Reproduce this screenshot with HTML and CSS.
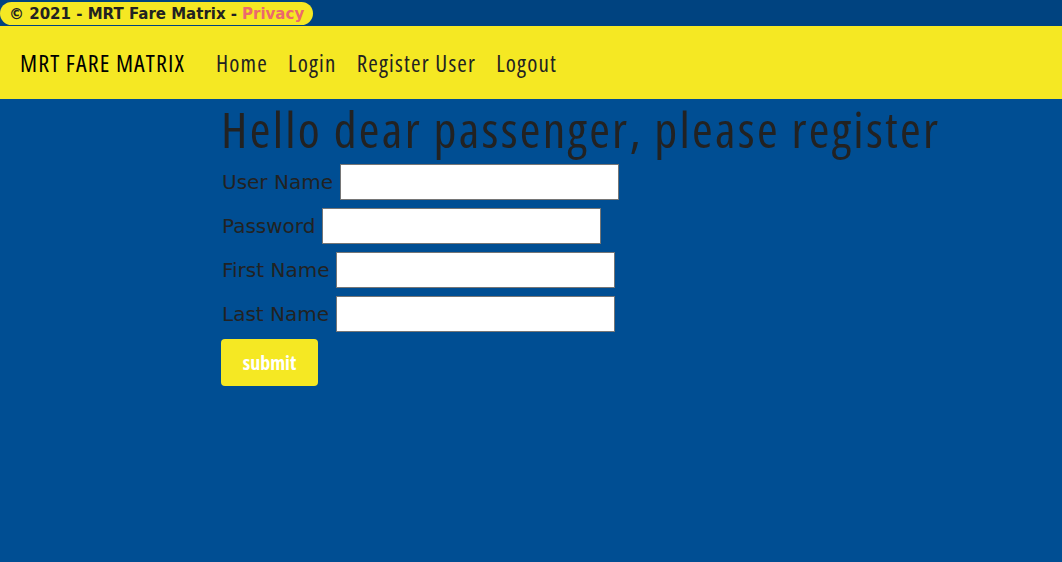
FILE: index.html
```html
<!DOCTYPE html>
<html>
<head>
<meta charset="utf-8">
<title>MRT Fare Matrix</title>
<link rel="stylesheet" href="styles.css">
</head>
<body>
<footer class="topbar">
  <div class="pill">© 2021 - MRT Fare Matrix - <a class="privacy" href="#">Privacy</a></div>
</footer>
<nav class="navbar">
  <a class="brand" href="#">MRT FARE MATRIX</a>
  <ul class="nav">
    <li><a href="#">Home</a></li>
    <li><a href="#">Login</a></li>
    <li><a href="#">Register User</a></li>
    <li><a href="#">Logout</a></li>
  </ul>
</nav>
<main class="main">
  <h1 class="title">Hello dear passenger, please register</h1>
  <form class="form">
    <div class="row"><label>User Name</label><input type="text"></div>
    <div class="row"><label>Password</label><input type="password"></div>
    <div class="row"><label>First Name</label><input type="text"></div>
    <div class="row"><label>Last Name</label><input type="text"></div>
    <button type="button" class="submit">submit</button>
  </form>
</main>
</body>
</html>
```
FILE: styles.css
```css
html, body {
  margin: 0;
  padding: 0;
}
body {
  background: #004e93;
  height: 562px;
  font-family: "DejaVu Sans", sans-serif;
  color: #222;
}
.topbar {
  background: #004380;
  height: 26px;
  display: flex;
  align-items: center;
}
.pill {
  background: #f5e823;
  border-radius: 12px;
  height: 23px;
  margin-top: 1px;
  padding: 0 9px;
  display: flex;
  align-items: center;
  font-weight: bold;
  font-size: 15px;
  color: #222;
}
.privacy {
  color: #ec696d;
  text-decoration: none;
  margin-left: 5px;
}
.navbar {
  background: #f5e823;
  height: 73px;
  display: flex;
  align-items: center;
  padding-left: 20px;
  font-family: "Open Sans", sans-serif;
  font-stretch: 75%;
}
.brand {
  color: #000;
  text-decoration: none;
  font-size: 24px;
  letter-spacing: 1.1px;
  margin-right: 31px;
}
.nav {
  list-style: none;
  display: flex;
  gap: 20px;
  margin: 0;
  padding: 0;
}
.nav a {
  color: #222;
  text-decoration: none;
  font-size: 23px;
  letter-spacing: 1.2px;
}
.main {
  padding-left: 222px;
}
.title {
  font-family: "Open Sans", sans-serif;
  font-stretch: 75%;
  font-weight: normal;
  font-size: 50px;
  letter-spacing: 2.3px;
  line-height: 60px;
  margin: 0 0 0 -1px;
}
.form {
  display: flex;
  flex-direction: column;
  align-items: flex-start;
  gap: 8px;
  margin-top: 5px;
}
.row {
  display: flex;
  align-items: center;
  gap: 7px;
  font-size: 20px;
}
.row label {
  color: #222;
}
.row input {
  width: 279px;
  height: 36px;
  box-sizing: border-box;
  border: 1px solid #767676;
  background: #fff;
  margin: 0;
}
.submit {
  margin-left: -1px;
  margin-top: -1px;
  width: 97px;
  height: 47px;
  background: #f5e823;
  color: #fff;
  border: none;
  border-radius: 4px;
  font-family: "Open Sans", sans-serif;
  font-stretch: 75%;
  font-weight: bold;
  font-size: 20px;
}
```
